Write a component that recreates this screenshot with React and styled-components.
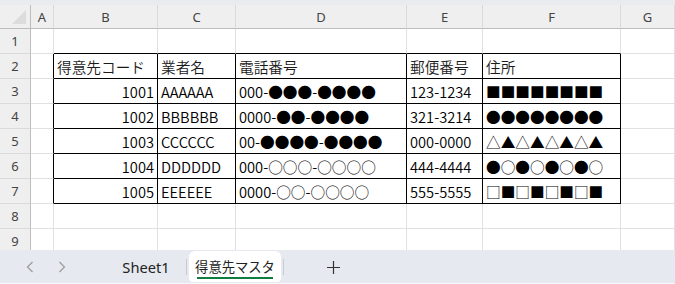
import React from "react";
import styled, { createGlobalStyle } from "styled-components";

const GlobalStyle = createGlobalStyle`
  html, body {
    margin: 0;
    padding: 0;
    background: #fff;
    overflow: hidden;
  }
  * {
    box-sizing: border-box;
  }
`;

const COLS = ["A", "B", "C", "D", "E", "F", "G"];
const WIDTHS = "31px 23px 104px 78px 171px 76px 138px 1fr";

const rows = [
  ["1001", "AAAAAA", "000-●●●-●●●●", "123-1234", "■■■■■■■■"],
  ["1002", "BBBBBB", "0000-●●-●●●●", "321-3214", "●●●●●●●●"],
  ["1003", "CCCCCC", "00-●●●●-●●●●", "000-0000", "△▲△▲△▲△▲"],
  ["1004", "DDDDDD", "000-○○○-○○○○", "444-4444", "●○●○●○●○"],
  ["1005", "EEEEEE", "0000-○○-○○○○", "555-5555", "□■□■□■□■"],
];

const headers = ["得意先コード", "業者名", "電話番号", "郵便番号", "住所"];

const Window = styled.div`
  width: 675px;
  height: 284px;
  display: flex;
  flex-direction: column;
  font-family: "Noto Sans CJK JP", "Noto Sans", sans-serif;
  background: #fff;
`;

const TopStrip = styled.div`
  height: 5px;
  background: #e9ebef;
`;

const Sheet = styled.div`
  height: 245px;
  overflow: hidden;
  display: grid;
  grid-template-columns: ${WIDTHS};
  grid-template-rows: 24px;
  grid-auto-rows: 25px;
`;

const Corner = styled.div`
  position: relative;
  background: #efefef;
  border-right: 1px solid #bdbdbd;
  border-bottom: 1px solid #bdbdbd;

  &::after {
    content: "";
    position: absolute;
    right: 4px;
    bottom: 4px;
    width: 0;
    height: 0;
    border-left: 14px solid transparent;
    border-bottom: 14px solid #dcdcdc;
  }
`;

const ColHead = styled.div`
  display: flex;
  align-items: center;
  justify-content: center;
  background: #efefef;
  border-right: 1px solid #dadada;
  border-bottom: 1px solid #bdbdbd;
  font-family: "Noto Sans", "Open Sans", sans-serif;
  font-size: 13px;
  color: #444;
  padding-top: 1px;
`;

const RowHead = styled.div`
  display: flex;
  align-items: center;
  justify-content: center;
  background: #efefef;
  border-right: 1px solid #bdbdbd;
  border-bottom: 1px solid #dadada;
  font-family: "Noto Sans", "Open Sans", sans-serif;
  font-size: 13px;
  color: #444;
`;

const Cell = styled.div`
  display: flex;
  align-items: center;
  justify-content: ${(p) => (p.$num ? "flex-end" : "flex-start")};
  padding: 1px 3px 0 3px;
  border-right: 1px solid ${(p) => (p.$rb ? "#000" : "#e1e1e1")};
  border-bottom: 1px solid ${(p) => (p.$bb ? "#000" : "#e1e1e1")};
  font-size: 14.67px;
  font-weight: 350;
  color: ${(p) => (p.$head ? "#1a1a1a" : "#000")};
  white-space: nowrap;
  overflow: hidden;
`;

const TabBar = styled.div`
  flex: 1;
  display: flex;
  align-items: stretch;
  background: #e6e9ef;
  border-bottom: 1px solid #f7f8fa;
  padding-top: 1px;
`;

const NavButton = styled.div`
  width: 32px;
  display: flex;
  align-items: center;
  justify-content: center;
  color: #9b9b9b;
  margin-left: ${(p) => (p.$first ? "14px" : "0")};
`;

const Tab = styled.div`
  position: relative;
  display: flex;
  align-items: center;
  justify-content: center;
  width: ${(p) => p.$w}px;
  margin-left: ${(p) => p.$ml || 0}px;
  margin-bottom: 1px;
  font-size: ${(p) => (p.$active ? "13.3px" : "14.67px")};
  color: #222;
  background: ${(p) => (p.$active ? "#fff" : "transparent")};
  border-radius: 6px 6px 4px 4px;
  font-family: ${(p) =>
    p.$active ? `"Noto Sans CJK JP", sans-serif` : `"Noto Sans", "Open Sans", sans-serif`};

  &::after {
    content: "";
    display: ${(p) => (p.$active ? "block" : "none")};
    position: absolute;
    left: 8px;
    right: 8px;
    bottom: 3px;
    height: 2px;
    background: #107c41;
  }
`;

const Divider = styled.div`
  width: 1px;
  margin: 8px 2px 8px 2px;
  background: #c7cad0;
`;

const AddButton = styled.div`
  display: flex;
  align-items: center;
  justify-content: center;
  width: 28px;
  margin-left: 33px;
  color: #333;
`;

const Chevron = ({ dir }) => (
  <svg width="8" height="12" viewBox="0 0 8 12" fill="none" stroke="currentColor" strokeWidth="1.2">
    {dir === "left" ? <path d="M6.5 1 1.5 6l5 5" /> : <path d="M1.5 1l5 5-5 5" />}
  </svg>
);

const Plus = () => (
  <svg width="13" height="13" viewBox="0 0 13 13" stroke="currentColor" strokeWidth="1.2">
    <path d="M6.5 0v13M0 6.5h13" />
  </svg>
);

export default function App() {
  const renderRow = (n, cells, headRow) => {
    const inTable = n >= 2 && n <= 7;
    return (
      <React.Fragment key={n}>
        <RowHead>{n}</RowHead>
        <Cell $rb={inTable} />
        {[0, 1, 2, 3, 4].map((i) => (
          <Cell
            key={i}
            $rb={inTable}
            $bb={n >= 1 && n <= 7}
            $num={!headRow && i === 0 && inTable}
            $head={headRow}
          >
            {cells ? cells[i] : ""}
          </Cell>
        ))}
        <Cell />
      </React.Fragment>
    );
  };

  return (
    <>
      <GlobalStyle />
      <Window>
        <TopStrip />
        <Sheet>
          <Corner />
          {COLS.map((c) => (
            <ColHead key={c}>{c}</ColHead>
          ))}
          {renderRow(1, null, false)}
          {renderRow(2, headers, true)}
          {rows.map((r, i) => renderRow(i + 3, r, false))}
          {renderRow(8, null, false)}
          {renderRow(9, null, false)}
        </Sheet>
        <TabBar>
          <NavButton $first>
            <Chevron dir="left" />
          </NavButton>
          <NavButton>
            <Chevron dir="right" />
          </NavButton>
          <Tab $w={76} $ml={30}>
            Sheet1
          </Tab>
          <Divider />
          <Tab $w={92} $active>
            得意先マスタ
          </Tab>
          <Divider />
          <AddButton>
            <Plus />
          </AddButton>
        </TabBar>
      </Window>
    </>
  );
}
